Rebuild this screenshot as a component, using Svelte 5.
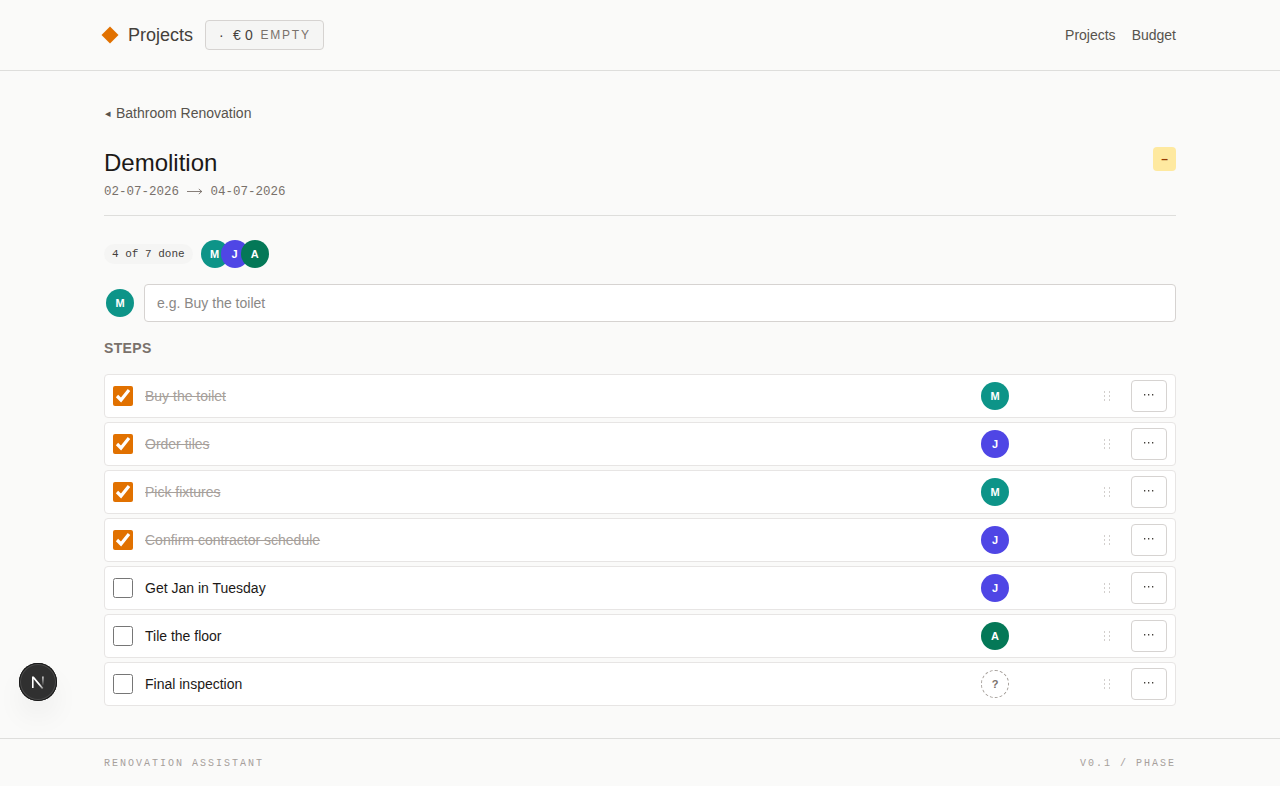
<script>
  const colors = { M: '#0d9488', J: '#4f46e5', A: '#047857' };
  let steps = $state([
    { name: 'Buy the toilet', done: true, who: 'M' },
    { name: 'Order tiles', done: true, who: 'J' },
    { name: 'Pick fixtures', done: true, who: 'M' },
    { name: 'Confirm contractor schedule', done: true, who: 'J' },
    { name: 'Get Jan in Tuesday', done: false, who: 'J' },
    { name: 'Tile the floor', done: false, who: 'A' },
    { name: 'Final inspection', done: false, who: null }
  ]);
  let doneCount = $derived(steps.filter((s) => s.done).length);
</script>

{#snippet avatar(who)}
  {#if who}
    <span class="avatar" style:background={colors[who]}>{who}</span>
  {:else}
    <span class="avatar unassigned">?</span>
  {/if}
{/snippet}

<div class="page">
  <header>
    <div class="container bar">
      <div class="brand">
        <svg class="diamond" viewBox="0 0 18 18" width="18" height="18"><path d="M9 .5 17.5 9 9 17.5.5 9z" fill="#e17100" /></svg>
        <span class="title">Projects</span>
        <span class="chip"><span class="dot">·</span><span class="euro">€</span><span class="amount">0</span><span class="empty">EMPTY</span></span>
      </div>
      <nav><a href="#projects">Projects</a><a href="#budget">Budget</a></nav>
    </div>
  </header>

  <main class="container">
    <a class="back" href="#back"><span class="arrow">◂</span>Bathroom Renovation</a>
    <div class="heading">
      <div>
        <h1>Demolition</h1>
        <p class="dates">
          <span>02-07-2026</span>
          <svg width="16" height="16" viewBox="0 0 16 16" fill="none" stroke="#79716b"><path d="M0 8.5h15M11.8 6l3 2.5-3 2.5" stroke-width=".9" /></svg>
          <span>04-07-2026</span>
        </p>
      </div>
      <span class="status">–</span>
    </div>

    <div class="summary">
      <span class="progress">{doneCount} of {steps.length} done</span>
      <div class="stack">
        {@render avatar('M')}{@render avatar('J')}{@render avatar('A')}
      </div>
    </div>

    <div class="add">
      {@render avatar('M')}
      <input class="field" type="text" placeholder="e.g. Buy the toilet" />
    </div>

    <h2>STEPS</h2>
    <ul>
      {#each steps as step}
        <li>
          <input class="check" type="checkbox" bind:checked={step.done} />
          <span class="name" class:done={step.done}>{step.name}</span>
          {@render avatar(step.who)}
          <span class="grip">
            <svg width="8" height="10" viewBox="0 0 8 10" fill="#a6a09b">
              <path d="M1 .5h1v1H1zM6 .5h1v1H6zM1 4.5h1v1H1zM6 4.5h1v1H6zM1 8.5h1v1H1zM6 8.5h1v1H6z" />
            </svg>
          </span>
          <button aria-label={step.name}>
            <svg width="12" height="4" viewBox="0 0 12 4" fill="#44403b"><path d="M1 1.1h1.3v1.3H1zM5 1.1h1.3v1.3H5zM9 1.1h1.3v1.3H9z" /></svg>
          </button>
        </li>
      {/each}
    </ul>
  </main>

  <footer>
    <div class="container bar"><span>RENOVATION ASSISTANT</span><span>V0.1 / PHASE</span></div>
  </footer>
</div>

<div class="devtools">
  <svg width="38" height="38" viewBox="0 0 38 38" fill="none">
    <defs>
      <linearGradient id="diag" x1="20.5" y1="21" x2="24.5" y2="26" gradientUnits="userSpaceOnUse"><stop stop-color="#fff" /><stop offset="1" stop-color="#fff" stop-opacity=".35" /></linearGradient>
      <linearGradient id="stem" x1="24" y1="13" x2="24" y2="23" gradientUnits="userSpaceOnUse"><stop stop-color="#fff" stop-opacity=".85" /><stop offset="1" stop-color="#fff" stop-opacity="0" /></linearGradient>
    </defs>
    <path d="M13 25V13.4h1.8l9.6 11.7-1.4 1L14.6 16v9z" fill="url(#diag)" />
    <path d="M23.9 13.4v9.2" stroke="url(#stem)" stroke-width="1.6" />
  </svg>
</div>

<style>
  :global(body) { background: #fafaf9; }
  .page { min-height: 786px; display: flex; flex-direction: column; color: #1c1917; background: #fafaf9; font: 14px/20px "Liberation Sans", Arial, sans-serif; }
  .page, .page * { box-sizing: border-box; }
  .container { width: 1072px; margin: 0 auto; }
  .bar, .brand, nav { display: flex; align-items: center; }
  .bar { justify-content: space-between; }
  header { border-bottom: 1px solid #dededc; }
  header .bar { height: 70px; }
  .diamond { margin: 0 9px 0 -3px; }
  .title { font-size: 18px; line-height: 28px; color: #44403b; width: 65px; }
  .chip { display: flex; align-items: center; width: 119px; height: 30px; margin-left: 12px; padding-left: 13px; border: 1px solid #d6d3d1; border-radius: 4px; background: #f5f5f4; color: #44403b; }
  .dot { width: 14px; }
  .euro { width: 12px; }
  .amount { width: 15.6px; }
  .empty { font-size: 12px; letter-spacing: 1.75px; color: #79716b; }
  nav { gap: 16px; }
  nav a, .back { color: #57534d; text-decoration: none; }
  .back { display: flex; margin-top: 32px; }
  .arrow { width: 12px; padding-left: 1px; font-size: 11px; line-height: 21px; height: 20px; }
  .heading { display: flex; justify-content: space-between; align-items: flex-start; margin-top: 24px; height: 69px; border-bottom: 1px solid #dededc; }
  h1 { margin: 0; font-size: 24px; line-height: 32px; font-weight: 400; }
  .dates { display: flex; margin: 4px 0 0; font: 12.5px/18px "Liberation Mono", monospace; color: #79716b; }
  .dates svg { margin: 0 8px 0 7.5px; }
  .status { width: 23px; height: 24px; border-radius: 4px; background: #fee9a0; color: #973c00; font-size: 12px; font-weight: 700; line-height: 24px; text-align: center; }
  .summary { display: flex; align-items: center; gap: 8px; margin-top: 24px; }
  .progress { padding: 2px 8px; border-radius: 10px; background: #f5f5f4; color: #44403b; font: 11px/16px "Liberation Mono", monospace; }
  .stack { display: flex; }
  .stack .avatar + .avatar { margin-left: -8px; }
  .avatar { flex: none; width: 28px; height: 28px; border-radius: 50%; color: #fff; font-size: 11px; line-height: 28px; font-weight: 700; text-align: center; }
  .unassigned { border: 1px dashed #a6a09b; color: #79716b; line-height: 26px; }
  .add { display: flex; align-items: center; gap: 10px; margin-top: 16px; padding-left: 2px; }
  .field { flex: 1; height: 38px; padding: 0 12px; border: 1px solid #d6d3d1; border-radius: 4px; background: #fff; font: inherit; }
  .field::placeholder { color: #8a8886; }
  h2 { margin: 16px 0; font-size: 14px; line-height: 20px; font-weight: 700; letter-spacing: .35px; color: #79716b; }
  ul { display: flex; flex-direction: column; gap: 4px; margin: 0; padding: 0; list-style: none; }
  li { display: flex; align-items: center; height: 44px; padding: 0 8px; border: 1px solid #e7e5e4; border-radius: 4px; background: #fff; }
  .check { width: 20px; height: 20px; margin: 0 12px 0 0; accent-color: #e17100; }
  .name { flex: 1; }
  .done { color: #a6a09b; text-decoration: line-through; }
  .grip { display: flex; width: 32px; justify-content: center; margin: 0 8px 0 82px; }
  button { display: flex; align-items: center; justify-content: center; width: 36px; height: 32px; padding: 0 0 2px; border: 1px solid #d6d3d1; border-radius: 4px; background: #fff; }
  footer { margin-top: auto; border-top: 1px solid #dededc; color: #a6a09b; font: 10px/15px "Liberation Mono", monospace; letter-spacing: 2px; }
  footer .bar { height: 47px; padding-top: 1px; }
  .devtools { position: fixed; left: 19px; top: 663px; width: 38px; height: 38px; border-radius: 50%; background: #303030; box-shadow: inset 0 0 0 1px #171717, inset 0 0 0 2px #4a4a4a, 0 16px 32px -8px rgba(0, 0, 0, .14); }
</style>
